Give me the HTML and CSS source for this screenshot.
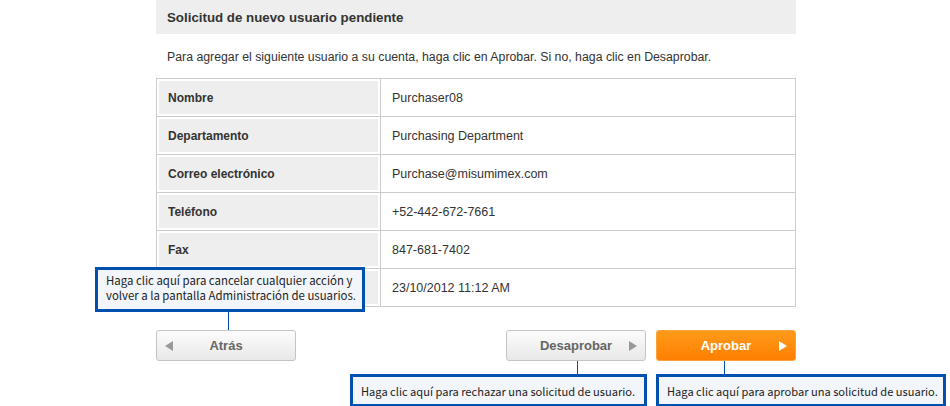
FILE: index.html
```html
<!DOCTYPE html>
<html lang="es">
<head>
  <meta charset="UTF-8">
  <title>Solicitud de nuevo usuario pendiente</title>
  <link rel="stylesheet" href="styles.css">
</head>
<body>

<div class="page">
  <h2 class="title">Solicitud de nuevo usuario pendiente</h2>
  <p class="intro">Para agregar el siguiente usuario a su cuenta, haga clic en Aprobar. Si no, haga clic en Desaprobar.</p>

  <table class="info">
    <tr><th>Nombre</th><td>Purchaser08</td></tr>
    <tr><th>Departamento</th><td>Purchasing Department</td></tr>
    <tr><th>Correo electrónico</th><td>Purchase@misumimex.com</td></tr>
    <tr><th>Teléfono</th><td>+52-442-672-7661</td></tr>
    <tr><th>Fax</th><td>847-681-7402</td></tr>
    <tr><th></th><td>23/10/2012 11:12 AM</td></tr>
  </table>

  <div class="actions">
    <div class="btn-wrap">
      <button class="btn btn-back"><span class="arrow-left"></span>Atrás</button>
      <div class="tip tip-back">Haga clic aquí para cancelar cualquier acción y<br>volver a la pantalla Administración de usuarios.</div>
    </div>
    <div class="right">
      <button class="btn btn-deny">Desaprobar<span class="arrow-right"></span></button>
      <button class="btn btn-ok">Aprobar<span class="arrow-right"></span></button>
    </div>
  </div>

  <div class="tips">
    <div class="tip tip-deny">Haga clic aquí para rechazar una solicitud de usuario.</div>
    <div class="tip tip-ok">Haga clic aquí para aprobar una solicitud de usuario.</div>
  </div>
</div>

</body>
</html>
```

FILE: styles.css
```css
body {
  margin: 0;
  font-family: "Liberation Sans", Arial, sans-serif;
  color: #333;
  background: #fff;
}

.page {
  width: 640px;
  margin-left: 156px;
}

.title {
  margin: 0;
  height: 34px;
  line-height: 35px;
  padding-left: 11px;
  background: #eee;
  font-size: 13.3px;
  font-weight: bold;
  color: #333;
}

.intro {
  margin: 0;
  height: 44px;
  line-height: 46px;
  padding-left: 11px;
  font-size: 12.3px;
}

.info {
  width: 640px;
  border-collapse: collapse;
  font-size: 12.5px;
}

.info th,
.info td {
  height: 37px;
  padding: 0 0 0 11px;
  border: 1px solid #ccc;
  text-align: left;
}

.info th {
  width: 212px;
  background: #eee;
  box-shadow: inset 0 0 0 2px #fff;
  font-size: 12px;
  font-weight: bold;
}

.actions {
  display: flex;
  justify-content: space-between;
  margin-top: 23px;
}

.right {
  display: flex;
  gap: 10px;
}

.btn-wrap {
  position: relative;
  height: 31px;
}

.btn {
  position: relative;
  display: block;
  width: 140px;
  height: 31px;
  border-radius: 3px;
  font-family: "Liberation Sans", Arial, sans-serif;
  font-size: 13px;
  font-weight: bold;
  cursor: pointer;
}

.btn-back,
.btn-deny {
  border: 1px solid #c4c4c4;
  background: linear-gradient(#fcfcfc, #e8e8e8);
  color: #666;
}

.btn-ok {
  border: 1px solid #f9a23a;
  background: linear-gradient(#ff9a1a, #ff7f00);
  color: #fff;
}

.arrow-left {
  position: absolute;
  left: 8px;
  top: 10px;
  border-style: solid;
  border-width: 5px 8px 5px 0;
  border-color: transparent #999 transparent transparent;
}

.arrow-right {
  position: absolute;
  right: 8px;
  top: 10px;
  border-style: solid;
  border-width: 5px 0 5px 8px;
  border-color: transparent transparent transparent #999;
}

.btn-ok .arrow-right {
  border-left-color: #fff;
}

.tip {
  position: relative;
  box-sizing: border-box;
  border: 3px solid #0050b0;
  background: #f2f6fa;
  color: #222;
  font-family: "Noto Sans CJK JP", "DejaVu Sans", sans-serif;
  font-size: 11.1px;
  white-space: nowrap;
}

.tip::after {
  content: "";
  position: absolute;
  width: 1px;
  background: #0050b0;
}

.tip-back {
  position: absolute;
  left: -61px;
  top: -63px;
  width: 270px;
  height: 45px;
  padding: 3px 0 0 8px;
  font-size: 11.4px;
  line-height: 15px;
}

.tip-back::after {
  left: 130px;
  top: 42px;
  height: 18px;
}

.tips {
  display: flex;
  gap: 9px;
  margin: 13px 0 0 194px;
  width: 600px;
}

.tip-deny,
.tip-ok {
  height: 33px;
  padding-left: 8px;
  line-height: 28px;
}

.tip-deny {
  width: 297px;
}

.tip-ok {
  width: 290px;
}

.tip-deny::after {
  left: 224px;
  top: -16px;
  height: 13px;
}

.tip-ok::after {
  left: 65px;
  top: -16px;
  height: 13px;
}
```
